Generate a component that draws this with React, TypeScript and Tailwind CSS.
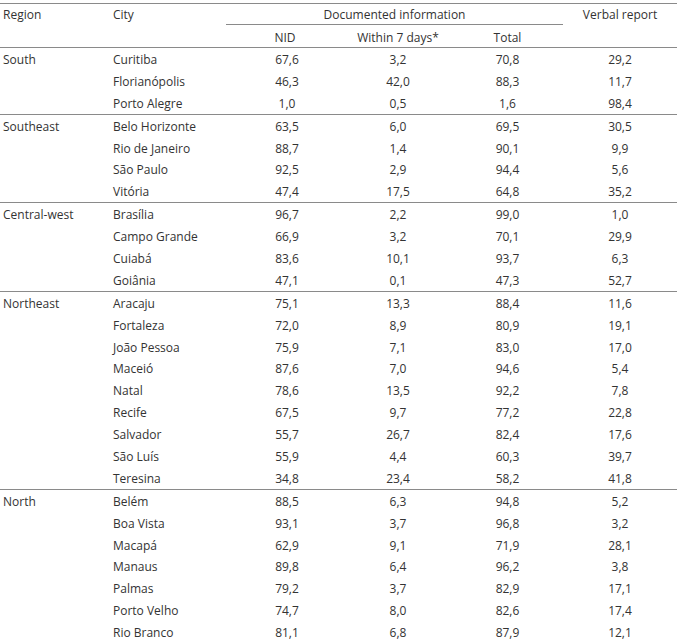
import React from "react";

type Row = [string, string, string, string, string];
const groups: { region: string; rows: Row[] }[] = [
  {
    region: "South",
    rows: [
      ["Curitiba", "67,6", "3,2", "70,8", "29,2"],
      ["Florianópolis", "46,3", "42,0", "88,3", "11,7"],
      ["Porto Alegre", "1,0", "0,5", "1,6", "98,4"],
    ],
  },
  {
    region: "Southeast",
    rows: [
      ["Belo Horizonte", "63,5", "6,0", "69,5", "30,5"],
      ["Rio de Janeiro", "88,7", "1,4", "90,1", "9,9"],
      ["São Paulo", "92,5", "2,9", "94,4", "5,6"],
      ["Vitória", "47,4", "17,5", "64,8", "35,2"],
    ],
  },
  {
    region: "Central-west",
    rows: [
      ["Brasília", "96,7", "2,2", "99,0", "1,0"],
      ["Campo Grande", "66,9", "3,2", "70,1", "29,9"],
      ["Cuiabá", "83,6", "10,1", "93,7", "6,3"],
      ["Goiânia", "47,1", "0,1", "47,3", "52,7"],
    ],
  },
  {
    region: "Northeast",
    rows: [
      ["Aracaju", "75,1", "13,3", "88,4", "11,6"],
      ["Fortaleza", "72,0", "8,9", "80,9", "19,1"],
      ["João Pessoa", "75,9", "7,1", "83,0", "17,0"],
      ["Maceió", "87,6", "7,0", "94,6", "5,4"],
      ["Natal", "78,6", "13,5", "92,2", "7,8"],
      ["Recife", "67,5", "9,7", "77,2", "22,8"],
      ["Salvador", "55,7", "26,7", "82,4", "17,6"],
      ["São Luís", "55,9", "4,4", "60,3", "39,7"],
      ["Teresina", "34,8", "23,4", "58,2", "41,8"],
    ],
  },
  {
    region: "North",
    rows: [
      ["Belém", "88,5", "6,3", "94,8", "5,2"],
      ["Boa Vista", "93,1", "3,7", "96,8", "3,2"],
      ["Macapá", "62,9", "9,1", "71,9", "28,1"],
      ["Manaus", "89,8", "6,4", "96,2", "3,8"],
      ["Palmas", "79,2", "3,7", "82,9", "17,1"],
      ["Porto Velho", "74,7", "8,0", "82,6", "17,4"],
      ["Rio Branco", "81,1", "6,8", "87,9", "12,1"],
    ],
  },
];

export default function App() {
  return (
    <div
      className="w-[677px] h-[642px] overflow-hidden bg-white text-[#333333] text-[12px] leading-[22px]"
      style={{ fontFamily: '"Open Sans", "Noto Sans", sans-serif' }}
    >
      <div className="h-[3px]" />
      {/* header */}
      <div className="border-t border-b border-[#8a8a8a] flex">
        <div className="w-[113px] pl-[3px]">Region</div>
        <div className="w-[113px]">City</div>
        <div className="w-[337px] flex flex-col">
          <div className="border-b border-[#8a8a8a] text-center h-[21px] leading-[22px]">
            Documented information
          </div>
          <div className="flex h-[22px] leading-[25px]">
            <div className="w-[118px] text-center">NID</div>
            <div className="w-[108px] text-center">Within 7 days*</div>
            <div className="w-[111px] text-center">Total</div>
          </div>
        </div>
        <div className="w-[114px] text-center">Verbal report</div>
      </div>
      {groups.map((g, gi) => (
        <div key={g.region} className={gi > 0 ? "border-t border-[#8a8a8a]" : ""}>
          {g.rows.map((r, ri) => (
            <div key={r[0]} className="flex h-[21.9px] pt-[5px] leading-[14px]">
              <div className="w-[113px] pl-[3px]">{ri === 0 ? g.region : ""}</div>
              <div className="w-[113px]">{r[0]}</div>
              <div className="w-[118px] text-center pl-[4px]">{r[1]}</div>
              <div className="w-[108px] text-center">{r[2]}</div>
              <div className="w-[111px] text-center">{r[3]}</div>
              <div className="w-[114px] text-center">{r[4]}</div>
            </div>
          ))}
        </div>
      ))}
    </div>
  );
}
